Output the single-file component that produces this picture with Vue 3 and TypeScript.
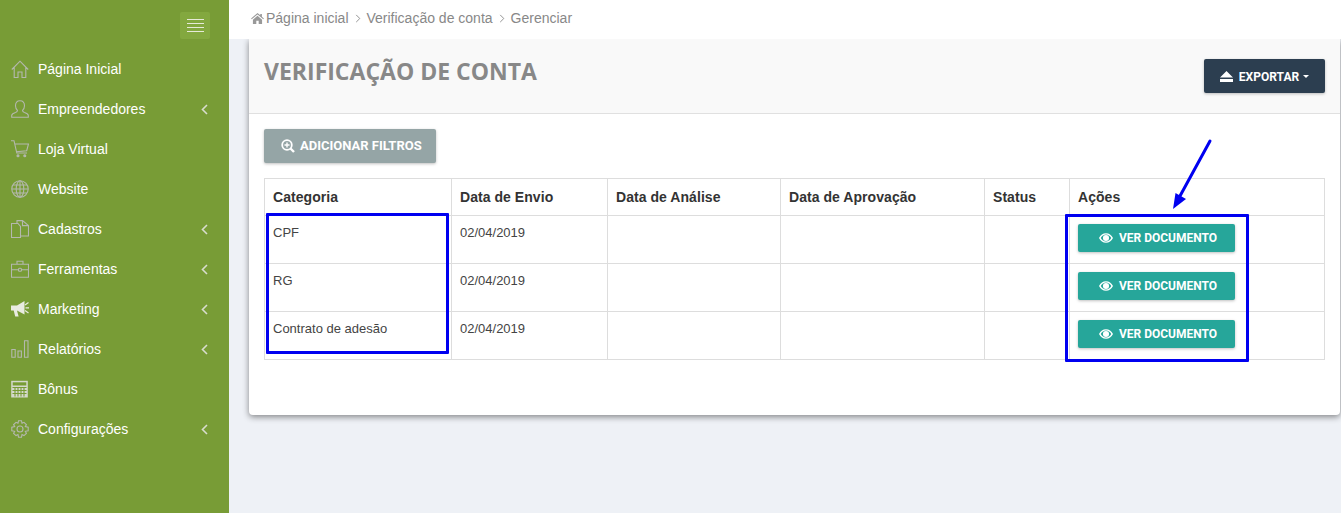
<script setup lang="ts">
interface MenuItem { label: string; icon: string; arrow: boolean }
const menu: MenuItem[] = [
  { label: 'Página Inicial', icon: 'home', arrow: false },
  { label: 'Empreendedores', icon: 'user', arrow: true },
  { label: 'Loja Virtual', icon: 'cart', arrow: false },
  { label: 'Website', icon: 'globe', arrow: false },
  { label: 'Cadastros', icon: 'docs', arrow: true },
  { label: 'Ferramentas', icon: 'case', arrow: true },
  { label: 'Marketing', icon: 'horn', arrow: true },
  { label: 'Relatórios', icon: 'bars', arrow: true },
  { label: 'Bônus', icon: 'calc', arrow: false },
  { label: 'Configurações', icon: 'gear', arrow: true },
]
const rows = ['CPF', 'RG', 'Contrato de adesão']
const heads = ['Categoria', 'Data de Envio', 'Data de Análise', 'Data de Aprovação', 'Status', 'Ações']
</script>

<template>
  <div class="page">
    <aside class="side">
      <div class="toggle-row">
        <button class="toggle"><span></span><span></span><span></span><span></span></button>
      </div>
      <nav>
        <div v-for="m in menu" :key="m.label" class="item">
          <svg class="mi" viewBox="0 0 18 18" fill="none" stroke="#b4b8ae" stroke-width="1.100">
            <template v-if="m.icon === 'home'">
              <path d="M.8 9.500 9 1.200l8.200 8.300M3.200 7.500v10h3.800v-5.500h4v5.500h3.800v-10" />
            </template>
            <template v-else-if="m.icon === 'user'">
              <path d="M.7 17.300v-1.800c0-1.500 1.500-2.300 3.800-3 1.500-.5 2-1 2-2.200-1.200-1-2-2.500-2-4.500C4.500 2.500 6.300.7 9 .7s4.500 1.800 4.500 5.100c0 2-.8 3.500-2 4.500 0 1.200.5 1.700 2 2.200 2.300.7 3.800 1.500 3.800 3v1.800z" />
            </template>
            <template v-else-if="m.icon === 'cart'">
              <path d="M0 .7h3l2.800 12.300h10.200M3.800 4h13.700l-1.800 6.700-10.500 1" />
              <circle cx="7" cy="15.800" r="1" fill="#b4b8ae" /><circle cx="13.800" cy="15.800" r="1" fill="#b4b8ae" />
            </template>
            <template v-else-if="m.icon === 'globe'">
              <circle cx="9" cy="9" r="8.200" /><ellipse cx="9" cy="9" rx="3.800" ry="8.200" />
              <path d="M9 .8v16.400M.8 9h16.400M2 5h14M2 13h14" />
            </template>
            <template v-else-if="m.icon === 'docs'">
              <path d="M.5 3.500h6.500l2.500 3v11H.5zM6 3.500V.6h5.500l6 5v10.400H9.500M11.500.6v5h6" />
            </template>
            <template v-else-if="m.icon === 'case'">
              <path d="M.5 4.300h17v13H.5zM.5 9.800h7M10.500 9.800h7M6 4.300V1.200h6v3.100" />
              <rect x="7.500" y="8.300" width="3" height="3" rx="1" />
            </template>
            <template v-else-if="m.icon === 'horn'">
              <path d="M0 5.500h6L13.500 1v13.500L6 10.500l1.600 6H4.200L2.700 10.500H0z" fill="#e8ebe0" stroke="none" />
              <path d="M14 5 17.500 2.500M14.500 7.800h3.500M14 10.500l3.500 2.500" stroke="#e8ebe0" stroke-width="1.200" />
            </template>
            <template v-else-if="m.icon === 'bars'">
              <path d="M.8 9.500h3.400v7.800H.8zM7 11h3.400v6.300H7zM13.500.8H17v16.500h-3.500z" />
            </template>
            <template v-else-if="m.icon === 'calc'">
              <path d="M.2.8h16.600v16.700H.2z" fill="#d5d9cc" stroke="none" />
              <path d="M1.700 2.300h13.600v3.200H1.700z" fill="#789c36" stroke="none" />
              <path d="M1.500 7.500h14M1.500 10.500h14M1.500 13.500h14M4 7v9.500M7 7v9.500M10 7v9.500M13 7v9.500" stroke="#789c36" />
            </template>
            <template v-else>
              <circle cx="9" cy="9" r="3" />
              <path d="M7.500.8h3l.5 2.500 2-1 2.400 2.300-1.100 2 2.900.6v3.500l-2.900.6 1.100 2-2.400 2.300-2-1-.5 2.600h-3L7 14.600l-2 1-2.400-2.300 1.100-2-2.900-.6V7.200l2.900-.6-1.100-2L5 2.300l2 1z" />
            </template>
          </svg>
          <span class="lbl">{{ m.label }}</span>
          <svg v-if="m.arrow" class="arrow" viewBox="0 0 7 11" fill="none" stroke="#d8dccd" stroke-width="1.600"><path d="M6 1 1.500 5.500 6 10" /></svg>
        </div>
      </nav>
    </aside>

    <main class="main">
      <div class="crumb">
        <svg class="home" viewBox="0 0 14 12" fill="#999"><path d="M7 0 0 6l.7.8L7 1.500l6.300 5.300.7-.8-2.200-1.900V1h-1.800v1.500zM2 7.300V12h3.700V8.500h2.600V12H12V7.300L7 3z" /></svg>
        <span>Página inicial</span>
        <svg class="sep" viewBox="0 0 6 10" fill="none" stroke="#888" stroke-width="1"><path d="M1 1l4 4-4 4" /></svg>
        <span>Verificação de conta</span>
        <svg class="sep" viewBox="0 0 6 10" fill="none" stroke="#888" stroke-width="1"><path d="M1 1l4 4-4 4" /></svg>
        <span>Gerenciar</span>
      </div>

      <section class="card">
        <header class="card-head">
          <h1>VERIFICAÇÃO DE CONTA</h1>
          <button class="btn export">
            <svg class="eject" viewBox="0 0 13 11" fill="#fff"><path d="M6.500 0 13 6.500H0zM0 8h13v3H0z" /></svg>
            EXPORTAR
            <i class="caret"></i>
          </button>
        </header>
        <div class="card-body">
          <button class="btn filter">
            <svg class="zoomi" viewBox="0 0 14 14" fill="none" stroke="#fff" stroke-width="1.800">
              <circle cx="6" cy="6" r="4.800" /><path d="M9.500 9.500 13 13" stroke-width="2.400" /><path d="M3.500 6h5M6 3.500v5" stroke-width="1.400" />
            </svg>
            ADICIONAR FILTROS
          </button>
          <table class="tbl">
            <colgroup>
              <col style="width:187px" /><col style="width:156px" /><col style="width:173px" /><col style="width:204px" /><col style="width:85px" /><col />
            </colgroup>
            <thead>
              <tr><th v-for="h in heads" :key="h">{{ h }}</th></tr>
            </thead>
            <tbody>
              <tr v-for="r in rows" :key="r">
                <td>{{ r }}</td>
                <td>02/04/2019</td>
                <td></td><td></td><td></td>
                <td>
                  <button class="btn doc">
                    <svg class="eye" viewBox="0 0 16 11"><path fill="#fff" fill-rule="evenodd" d="M8 0c3.400 0 6.300 2.200 8 5.500C14.300 8.800 11.400 11 8 11S1.700 8.800 0 5.500C1.700 2.200 4.600 0 8 0zm0 1.500C5.500 1.500 3.300 3 2 5.500 3.300 8 5.500 9.500 8 9.500s4.700-1.500 6-4C12.700 3 10.500 1.500 8 1.500zM8 2a3.500 3.500 0 1 1 0 7 3.500 3.500 0 0 1 0-7z" /></svg>
                    VER DOCUMENTO
                  </button>
                </td>
              </tr>
            </tbody>
          </table>
        </div>
      </section>
    </main>

    <div class="mark mark-a"></div>
    <div class="mark mark-b"></div>
    <svg class="pointer" viewBox="0 0 60 90" fill="none">
      <path d="M50 13 20 68" stroke="#0000f0" stroke-width="3" stroke-linecap="round" />
      <path d="M13 81 15.500 65 26 71z" fill="#0000f0" />
    </svg>
  </div>
</template>

<style>
html, body { margin: 0; padding: 0; }
</style>

<style scoped>
.page { position: relative; display: flex; width: 1341px; height: 513px; overflow: hidden; background: #eef1f6; font-family: "Liberation Sans", Arial, sans-serif; }
.side { width: 229px; flex: none; background: #789c36; }
.toggle-row { display: flex; justify-content: flex-end; padding: 12px 19px 0 0; height: 37px; }
.toggle { width: 30px; height: 27px; background: #83a83f; border: 0; border-radius: 2px; padding: 0; display: flex; flex-direction: column; align-items: center; justify-content: center; gap: 3px; }
.toggle span { display: block; width: 17px; height: 1px; background: #e6ead8; }
.item { height: 40px; display: flex; align-items: center; padding: 0 21px 0 11px; color: #fff; font-size: 14px; }
.mi { width: 18px; height: 18px; flex: none; margin-right: 9px; }
.lbl { flex: 1; }
.arrow { width: 7px; height: 11px; }
.main { flex: 1; min-width: 0; display: flex; flex-direction: column; padding-left: 20px; }
.crumb { position: relative; z-index: 1; height: 39px; box-sizing: border-box; padding-bottom: 3px; margin-left: -20px; padding-left: 22px; background: #fff; display: flex; align-items: center; color: #888; font-size: 14px; flex: none; }
.home { width: 13px; height: 11px; margin-right: 2px; }
.sep { width: 6px; height: 9px; margin: 0 6px; }
.card { width: 1091px; height: 376px; background: #fff; border-radius: 0 0 4px 4px; box-shadow: 0 2px 6px rgba(0,0,0,.45); display: flex; flex-direction: column; }
.card-head { height: 75px; box-sizing: border-box; background: #f9f9f9; border-bottom: 1px solid #e0e0e0; display: flex; justify-content: space-between; padding: 20px 15px 0; }
h1 { margin: 0; font: 700 23px/25px "Open Sans", sans-serif; color: #888; }
.btn { border: 0; border-radius: 2px; color: #fff; font-family: Roboto, sans-serif; font-weight: 700; display: flex; align-items: center; padding: 0; box-shadow: 0 1px 3px rgba(0,0,0,.25); }
.export { width: 121px; height: 34px; background: #2c3e50; font-size: 12px; justify-content: center; padding-top: 1px; }
.eject { width: 13px; height: 11px; margin-right: 6px; }
.caret { width: 0; height: 0; border: 3.500px solid transparent; border-top-color: #fff; border-bottom: 0; margin-left: 4px; }
.card-body { padding: 15px; }
.filter { width: 172px; height: 34px; background: #95a5a6; font-size: 13px; padding-left: 17px; padding-bottom: 1px; }
.zoomi { width: 14px; height: 14px; margin-right: 5px; }
.tbl { margin-top: 15px; width: 1061px; border-collapse: collapse; table-layout: fixed; color: #333; font-family: "Liberation Sans", sans-serif; }
th, td { border: 1px solid #ddd; padding: 0 8px; text-align: left; box-sizing: border-box; }
th { height: 37px; font-size: 14px; font-weight: 700; letter-spacing: .05px; color: #333; }
td { height: 48px; font-size: 13px; vertical-align: top; padding-top: 8px; line-height: 17px; color: #444; }
.doc { width: 157px; height: 28px; background: #26a69a; font-size: 12px; justify-content: center; padding-left: 3px; }
.eye { width: 14px; height: 10px; margin-right: 6px; }
.mark { position: absolute; border: 3px solid #0000f0; box-sizing: border-box; border-radius: 1px; }
.mark-a { left: 266px; top: 213px; width: 183px; height: 141px; }
.mark-b { left: 1065px; top: 214px; width: 184px; height: 148px; }
.pointer { position: absolute; left: 1160px; top: 128px; width: 60px; height: 90px; }
</style>
